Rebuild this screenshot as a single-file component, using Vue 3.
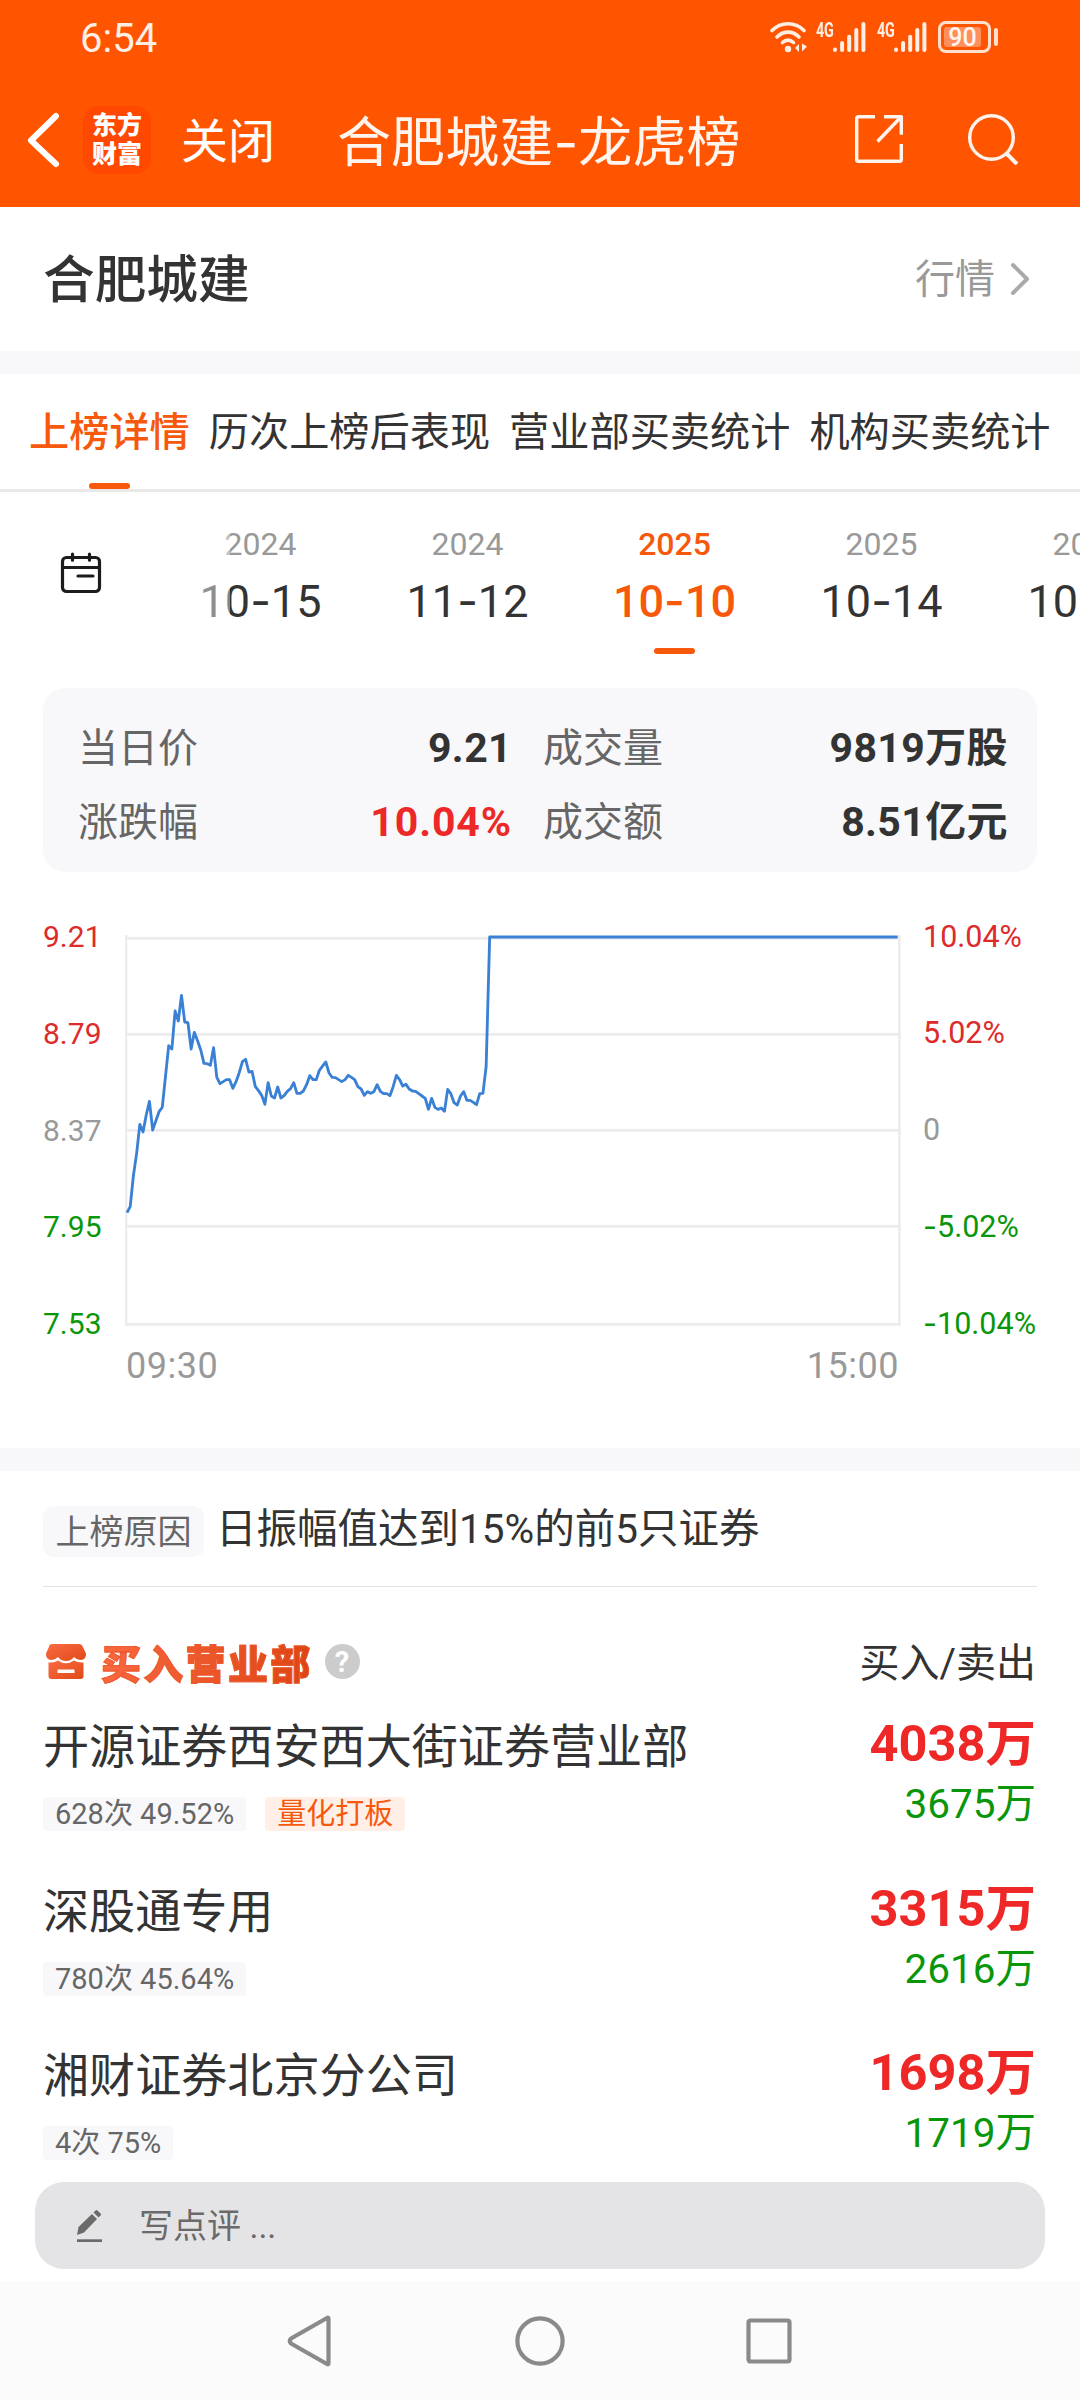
<template>
  <div class="page">
    <header class="header">
      <div class="status-bar">
        <span class="clock">6:54</span>
        <div class="status-icons">
          <svg class="wifi" width="38" height="34" viewBox="0 0 38 34" fill="none" stroke="#ffeee4" stroke-linecap="round">
            <path d="M2 10.5C11 1.5 25 1.5 34 10.5" stroke-width="3.6" />
            <path d="M7 17C13.500 10.500 22.500 10.500 29 17" stroke-width="3.6" />
            <path d="M12.500 22.500C16 19.500 20 19.500 23.500 22.500" stroke-width="3.6" />
            <circle cx="18" cy="29" r="3.200" fill="#ffeee4" stroke="none" />
            <path d="M25 28l4-4v8zM32 23.500v8l5-5z" fill="#ffeee4" stroke="none" />
          </svg>
          <div v-for="n in 2" :key="n" class="signal">
            <span class="network">4G</span>
            <svg width="34" height="32" viewBox="0 0 34 32" stroke="#ffeee4" stroke-width="4" stroke-linecap="round">
              <path d="M3 28.500v.6M10.100 22v7.100M17.200 15.700v13.400M24.300 9v20.100M31.400 3v26.100" />
            </svg>
          </div>
          <div class="battery">
            <span class="battery-level">90</span>
          </div>
          <span class="battery-nub"></span>
        </div>
      </div>

      <div class="nav">
        <svg class="back" width="34" height="58" viewBox="0 0 34 58" fill="none" stroke="#fff" stroke-width="6" stroke-linecap="round" stroke-linejoin="round">
          <path d="M29 5L4 29.500 29 53" />
        </svg>
        <div class="logo">
          <span>东方</span>
          <span>财富</span>
        </div>
        <span class="close">关闭</span>
        <h1 class="nav-title">合肥城建<span class="dash">-</span>龙虎榜</h1>
        <svg class="share" width="50" height="50" viewBox="0 0 50 50" fill="none" stroke="#fff4ee" stroke-width="3.400" stroke-linejoin="round">
          <path d="M21 2.700H4.500q-1.800 0-1.800 1.800v41q0 1.800 1.800 1.800h41q1.800 0 1.800-1.800V30" />
          <path d="M30 2.700h17.300v18M46.500 3.500L23.500 27.500" />
        </svg>
        <svg class="search" width="52" height="52" viewBox="0 0 52 52" fill="none" stroke="#fff4ee" stroke-width="3.400">
          <circle cx="24.500" cy="24.500" r="21.800" />
          <path d="M39 40l11 11" stroke-width="4" />
        </svg>
      </div>
    </header>

    <section class="stock">
      <h2 class="stock-name">合肥城建</h2>
      <a class="quote-link">
        <span>行情</span>
        <svg width="20" height="34" viewBox="0 0 20 34" fill="none" stroke="#aaa" stroke-width="4" stroke-linecap="round" stroke-linejoin="round">
          <path d="M3 3l14 14L3 31" />
        </svg>
      </a>
    </section>
    <div class="band"></div>

    <nav class="tabs">
      <span v-for="(tab, i) in tabs" :key="tab" class="tab" :class="{ active: i === 0 }">{{ tab }}</span>
    </nav>

    <section class="dates">
      <div class="calendar">
        <svg width="42" height="42" viewBox="0 0 42 42" fill="none" stroke="#1c1c1e" stroke-width="3.200" stroke-linecap="round">
          <rect x="2.500" y="5.500" width="37" height="34" rx="4" />
          <path d="M2.500 15.500h37M12.500 2.200v6M29.500 2.200v6M18 24h15" />
        </svg>
      </div>
      <div class="date-list">
        <div v-for="(d, i) in dates" :key="i" class="date" :class="{ active: i === 2 }">
          <span class="year">{{ d.year }}</span>
          <span class="day">{{ d.month }}<span class="dash">-</span>{{ d.day }}</span>
        </div>
      </div>
    </section>

    <section class="summary">
      <template v-for="item in summary" :key="item.label">
        <span class="summary-label">{{ item.label }}</span>
        <span class="summary-value" :class="{ up: item.up }">{{ item.value }}</span>
      </template>
    </section>

    <section class="chart">
      <div class="axis">
        <span v-for="(v, i) in prices" :key="v" :class="tone(i)">{{ v }}</span>
      </div>
      <svg class="plot" width="776" height="393" viewBox="0 0 2328 1179">
        <g stroke="#ececee" stroke-width="8">
          <path d="M3 0V1172M2323 0V1172" />
          <path v-for="y in gridLines" :key="y" :d="`M0 ${y}H2326`" />
        </g>
        <polyline :points="points" fill="none" stroke="#3a80d4" stroke-width="8.500" stroke-linejoin="round" />
      </svg>
      <div class="axis">
        <span v-for="(v, i) in percents" :key="v" :class="tone(i)">
          <span v-if="v[0] === '-'" class="dash">-</span>{{ v.replace('-', '') }}
        </span>
      </div>
    </section>
    <div class="times">
      <span>09:30</span>
      <span>15:00</span>
    </div>
    <div class="band"></div>

    <section class="reason">
      <span class="reason-tag">上榜原因</span>
      <span class="reason-text">日振幅值达到15%的前5只证券</span>
    </section>

    <section class="branches">
      <div class="branches-header">
        <svg width="42" height="38" viewBox="0 0 42 38">
          <defs>
            <linearGradient id="shop" x1="0" y1="0" x2="1" y2="1">
              <stop offset="0" stop-color="#fb6a42" />
              <stop offset="1" stop-color="#e04a18" />
            </linearGradient>
          </defs>
          <path fill="url(#shop)" d="M7 1h27q3 0 3.800 2.800L41 10.500q.4 6-5.500 6.500-4-.2-6.500-3-3 4-8 4t-8-4q-2.500 2.800-6.500 3Q.6 16.500 1 10.500L4 3.800Q4.500 1 7 1z" />
          <path fill="url(#shop)" fill-rule="evenodd" d="M3.500 19.500q6 .5 9.500-2 8 5.500 16 0 3.500 2.500 9.500 2V33q0 3-3 3h-29q-3 0-3-3zM12.500 26.500v3.500h17v-3.500z" />
        </svg>
        <span class="branches-title">买入营业部</span>
        <span class="help">?</span>
        <span class="branches-cols">买入/卖出</span>
      </div>

      <div v-for="b in branches" :key="b.name" class="branch">
        <div class="branch-info">
          <span class="branch-name">{{ b.name }}</span>
          <div class="branch-tags">
            <span class="tag">{{ b.stat }}</span>
            <span v-if="b.style" class="tag tag-style">{{ b.style }}</span>
          </div>
        </div>
        <div class="branch-amounts">
          <span class="buy">{{ b.buy }}</span>
          <span class="sell">{{ b.sell }}</span>
        </div>
      </div>
    </section>

    <div class="comment">
      <svg width="27" height="34" viewBox="0 0 27 34" fill="#6a6a6a">
        <path d="M1 26l1.500-8L16 5l5 5L8 23.500z" />
        <path d="M17.500 3.500L19.500 1.500q1-1 2 0l3 3q1 1 0 2l-2 2z" />
        <path d="M1 30.300h25v2.700H1z" />
      </svg>
      <span class="comment-hint">写点评 ...</span>
    </div>

    <footer class="system-nav">
      <svg width="46" height="54" viewBox="0 0 46 54" fill="none" stroke="#8a8a8a" stroke-width="4.200" stroke-linejoin="round">
        <path d="M41.500 4.500v45q0 1.500-1.500.5L4 29.500q-2.500-2.500 0-5L40 4q1.500-1 1.500.5z" />
      </svg>
      <svg width="54" height="54" viewBox="0 0 54 54" fill="none" stroke="#8a8a8a" stroke-width="4.200">
        <circle cx="27" cy="27" r="22.600" />
      </svg>
      <svg width="50" height="50" viewBox="0 0 50 50" fill="none" stroke="#8a8a8a" stroke-width="4.200">
        <rect x="4.500" y="4.500" width="41" height="41" rx="2" />
      </svg>
    </footer>
  </div>
</template>

<script setup>
import { computed } from 'vue';

const tabs = ['上榜详情', '历次上榜后表现', '营业部买卖统计', '机构买卖统计'];

const dates = [
  { year: '2024', month: '10', day: '15' },
  { year: '2024', month: '11', day: '12' },
  { year: '2025', month: '10', day: '10' },
  { year: '2025', month: '10', day: '14' },
  { year: '2025', month: '10', day: '15' },
];

const summary = [
  { label: '当日价', value: '9.21' },
  { label: '成交量', value: '9819万股' },
  { label: '涨跌幅', value: '10.04%', up: true },
  { label: '成交额', value: '8.51亿元' },
];

const prices = ['9.21', '8.79', '8.37', '7.95', '7.53'];
const percents = ['10.04%', '5.02%', '0', '-5.02%', '-10.04%'];
const gridLines = [10, 298, 586, 874, 1168];

// rows above the reference price are red, below are green
const tone = (i) => (i < 2 ? 'up' : i > 2 ? 'down' : 'flat');

// one sample per minute from 09:30, in plot units from the top grid line
const trace = [
  833, 815, 722, 655, 568, 591, 540, 499, 585, 557, 530, 517, 425, 332, 342, 228, 258, 181, 261, 263,
  342, 292, 317, 345, 385, 386, 391, 338, 427, 446, 440, 434, 434, 460, 440, 413, 380, 373, 411, 409,
  454, 467, 481, 508, 443, 483, 489, 456, 489, 482, 469, 461, 443, 475, 475, 468, 449, 422, 434, 434,
  406, 393, 381, 414, 427, 428, 434, 440, 434, 421, 427, 434, 455, 462, 481, 470, 475, 470, 449, 469,
  476, 476, 482, 455, 421, 434, 453, 448, 462, 468, 469, 476, 483, 490, 523, 490, 517, 523, 519, 529,
  463, 476, 503, 510, 483, 470, 496, 496, 502, 509, 476, 475, 395,
];
const MINUTE = 9.62;

const points = computed(() => {
  const line = trace.map((y, i) => `${(6 + i * MINUTE).toFixed(1)},${y}`);
  // limit-up for the rest of the session
  line.push('1094,6', '2318,6');
  return line.join(' ');
});

const branches = [
  { name: '开源证券西安西大街证券营业部', stat: '628次 49.52%', style: '量化打板', buy: '4038万', sell: '3675万' },
  { name: '深股通专用', stat: '780次 45.64%', buy: '3315万', sell: '2616万' },
  { name: '湘财证券北京分公司', stat: '4次 75%', buy: '1698万', sell: '1719万' },
];
</script>

<style>
body {
  background: #fff;
}
</style>

<style scoped>
.page {
  width: 1080px;
  height: 2400px;
  overflow: hidden;
  display: flex;
  flex-direction: column;
  background: #fff;
  color: #333;
  font-family: Roboto, "Noto Sans CJK SC", sans-serif;
  white-space: nowrap;
}
.page > * { flex-shrink: 0; box-sizing: border-box; }
svg { display: block; flex-shrink: 0; }
.dash { font-family: Inter, sans-serif; }

/* header */
.header {
  height: 207px;
  background: #ff5500;
  color: #fff4ee;
}
.status-bar {
  height: 76px;
  padding: 0 82px 0 80px;
  display: flex;
  justify-content: space-between;
  align-items: center;
}
.clock { font-size: 40px; color: #ffeee4; }
.status-icons { display: flex; align-items: center; padding-bottom: 3px; }
.wifi { margin-right: 8px; }
.signal { display: flex; align-items: flex-start; width: 61px; }
.network {
  width: 16px;
  font-size: 20px;
  line-height: 18px;
  font-weight: 700;
  letter-spacing: -0.5px;
  transform: scaleX(0.72);
  transform-origin: left;
  color: #ffeee4;
}
.battery {
  box-sizing: border-box;
  width: 53px;
  height: 32px;
  border: 3px solid #ffe0cf;
  border-radius: 8px;
  padding: 3px;
  color: #fff4ee;
}
.battery-level {
  display: block;
  width: 37px;
  height: 20px;
  border-radius: 3px;
  background: #ff8f5c;
  font-size: 25px;
  line-height: 21px;
  font-weight: 500;
  text-align: center;
}
.battery-nub { width: 4px; height: 18px; margin-left: 3px; border-radius: 2px; background: #ffe0cf; }

.nav { height: 128px; display: flex; align-items: center; padding-left: 27px; }
.back, .logo { margin-top: -1px; }
.logo {
  width: 68px;
  height: 68px;
  margin-left: 22px;
  border-radius: 15px;
  background: #ff4800;
  color: #fff;
  display: flex;
  flex-direction: column;
  align-items: center;
  justify-content: center;
  font-size: 25px;
  line-height: 29px;
  font-weight: 900;
}
.close { margin: -5px 0 0 30px; font-size: 47px; color: #fff; }
.nav-title { margin: -4px 0 0 62px; width: 406px; font-size: 54px; font-weight: 400; letter-spacing: 0.1px; }
.share { margin: -2px 0 0 111px; }
.search { margin: -2px 0 0 63px; }

/* stock */
.stock {
  height: 144px;
  padding: 0 50px 0 43px;
  display: flex;
  justify-content: space-between;
  align-items: center;
}
.stock-name { margin: -8px 0 0; font-size: 51.700px; font-weight: 500; }
.quote-link { display: flex; align-items: center; gap: 15px; font-size: 40px; color: #999; }
.quote-link span { margin-top: -6px; }
.band { height: 23px; background: #f8f8fa; }

/* tabs */
.tabs {
  height: 118px;
  padding-left: 29px;
  display: flex;
  gap: 19px;
  border-bottom: 3px solid #e8e8e8;
}
.tab { position: relative; font-size: 40.200px; line-height: 117px; }
.tab.active { color: #f7590c; font-weight: 500; }
.tab.active::after,
.date.active::after {
  content: '';
  position: absolute;
  left: 50%;
  bottom: 0;
  width: 41px;
  height: 6px;
  margin-left: -20.500px;
  border-radius: 3px;
  background: #f7590c;
}

/* dates */
.dates { height: 196px; display: flex; overflow: hidden; }
.calendar { width: 157px; flex-shrink: 0; box-sizing: border-box; padding: 60px 0 0 60px; }
.date-list { position: relative; display: flex; }
/* fade on the scrolled edge */
.date-list::before {
  content: '';
  position: absolute;
  z-index: 1;
  left: 0;
  top: 0;
  width: 73px;
  height: 160px;
  background: linear-gradient(90deg, rgba(255, 255, 255, 0.6), rgba(255, 255, 255, 0.4));
}
.date {
  position: relative;
  flex-shrink: 0;
  width: 207px;
  height: 162px;
  display: flex;
  flex-direction: column;
  align-items: center;
}
.year { margin-top: 33px; font-size: 32px; line-height: 38px; color: #999; }
.day { margin-top: 11px; font-size: 45px; line-height: 54px; }
.date.active .year { color: #f7590c; font-weight: 500; }
.date.active .day { color: #f7590c; font-weight: 500; }

/* summary */
.summary {
  margin: 0 43px;
  height: 184px;
  padding: 23px 29px 0 36px;
  border-radius: 22px;
  background: #f8f8fa;
  display: grid;
  grid-template-columns: 150px 283px 147px 1fr;
  grid-auto-rows: 74px;
  align-content: start;
  font-size: 40px;
  line-height: 75px;
}
.summary-label { color: #666; margin-left: -1px; }
.summary-label:nth-child(4n + 3) { margin-left: 31px; }
.summary-value { text-align: right; font-size: 41px; font-weight: 700; letter-spacing: 0.4px; }
.summary-value.up { color: #ec2828; letter-spacing: 0.9px; }

/* chart */
.chart { margin-top: 63px; padding: 0 43px; height: 393px; display: flex; }
.axis {
  display: flex;
  flex-direction: column;
  height: 423px;
  margin-top: -16px;
  justify-content: space-between;
  width: 82px;
  font-size: 30px;
  line-height: 36px;
}
.plot + .axis { margin-left: 22px; font-size: 30.500px; }
.axis .up { color: #dd2a2a; }
.axis .down { color: #0a960a; }
.axis .flat { color: #999; }
.times {
  height: 120px;
  padding: 17px 181px 0 126px;
  display: flex;
  justify-content: space-between;
  font-size: 36px;
  line-height: 42px;
  letter-spacing: 0.5px;
  color: #999;
}

/* reason */
.reason {
  height: 116px;
  margin: 0 43px;
  display: flex;
  border-bottom: 1px solid #e2e2e2;
}
.reason-tag {
  margin-top: 35px;
  width: 161px;
  height: 51px;
  border-radius: 11px;
  background: #f8f8fa;
  color: #666;
  font-size: 34px;
  line-height: 52px;
  text-align: center;
}
.reason-text { margin-left: 12px; font-size: 40.500px; line-height: 117px; }

/* branches */
.branches { height: 595px; overflow: hidden; padding: 0 43px; }
.branches-header { height: 115px; padding: 34px 0 0 2px; box-sizing: border-box; display: flex; align-items: center; }
.branches-title {
  margin-left: 14px;
  font-family: "Noto Sans CJK SC", sans-serif;
  font-size: 40px;
  line-height: 48px;
  font-weight: 900;
  letter-spacing: 2.300px;
  color: transparent;
  background: linear-gradient(90deg, #fa6840, #dd4413);
  -webkit-background-clip: text;
  background-clip: text;
  -webkit-text-stroke: 0.8px #ec5729;
}
.help {
  margin-left: 12px;
  width: 35px;
  height: 35px;
  border-radius: 50%;
  background: #ccc;
  color: #fff;
  font-size: 29px;
  line-height: 36px;
  font-weight: 700;
  text-align: center;
}
.branches-cols { margin: -3px 1px 0 auto; font-size: 40px; }

.branch { height: 164.500px; display: flex; justify-content: space-between; }
.branch-info { display: flex; flex-direction: column; }
.branch-name { margin-top: 17px; font-size: 46.100px; line-height: 56px; }
.branch-tags { margin-top: 22px; display: flex; gap: 19px; }
.tag {
  height: 34px;
  padding: 0 12px;
  border-radius: 4px;
  background: #f8f8fa;
  color: #666;
  font-size: 29px;
  line-height: 34px;
}
.tag-style { background: #ffefe7; color: #f7590c; }
.branch-amounts { display: flex; flex-direction: column; align-items: flex-end; padding-right: 1px; }
.buy { margin-top: 12px; font-size: 50.500px; line-height: 60px; font-weight: 700; color: #ee2727; }
.sell { margin-top: 5px; font-size: 40.500px; line-height: 50px; color: #0a960a; }

/* comment box */
.comment {
  margin: 0 35px;
  height: 87px;
  padding-left: 41px;
  border-radius: 29px;
  background: #e4e4e6;
  display: flex;
  align-items: center;
  gap: 36px;
  font-size: 34px;
  color: #6a6a6a;
}
.comment-hint { margin-top: -5px; }

/* system navigation */
.system-nav {
  margin-top: 12px;
  flex: 1;
  padding-left: 287px;
  display: flex;
  align-items: center;
  background: #fbfbfb;
}
.system-nav svg:nth-child(2) { margin-left: 180px; }
.system-nav svg:nth-child(3) { margin-left: 177px; }
</style>
